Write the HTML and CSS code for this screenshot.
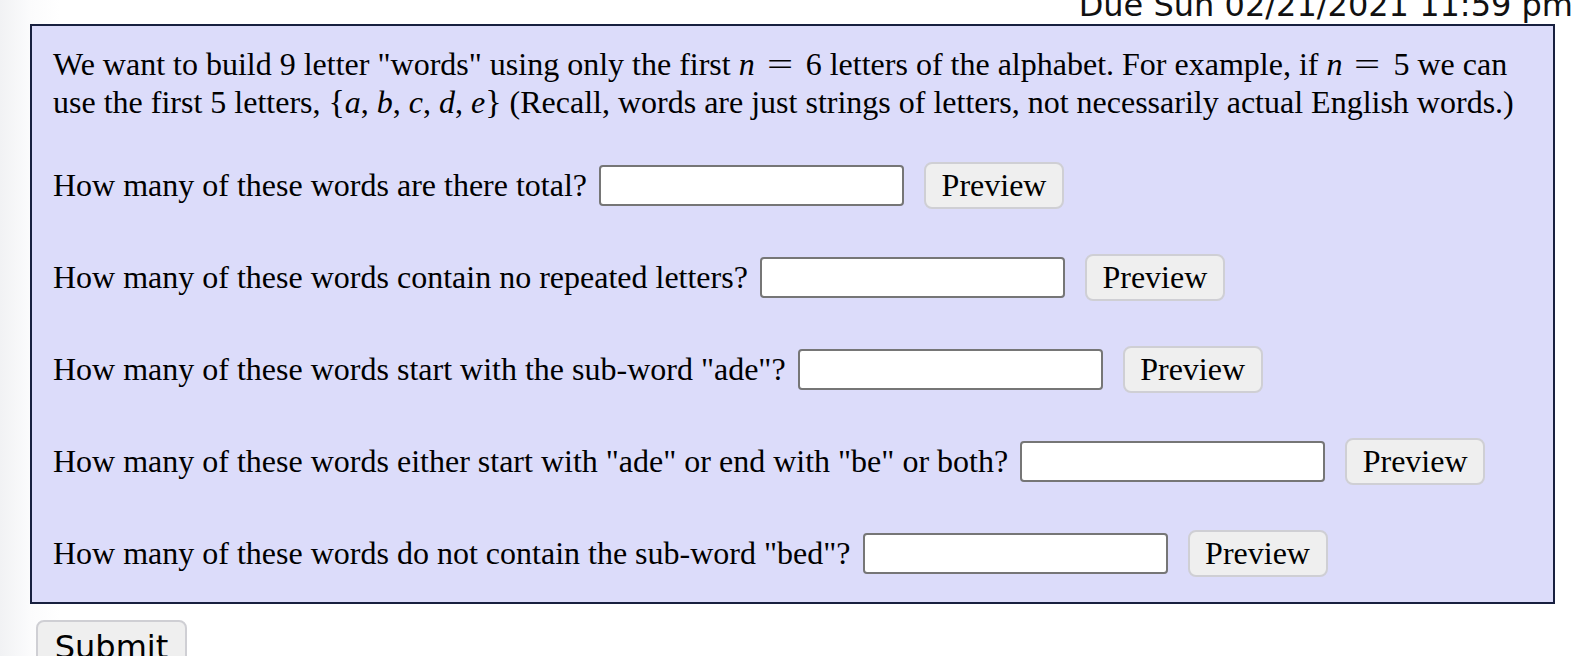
FILE: index.html
```html
<!DOCTYPE html>
<html>
<head>
<meta charset="utf-8">
<link rel="stylesheet" href="styles.css">
</head>
<body>
<div class="due">Due Sun 02/21/2021 11:59 pm</div>
<div class="problem">
  <p class="intro">We want to build 9 letter "words" using only the first <span class="math"><i>n</i><span class="eq">=</span>6</span> letters of the alphabet. For example, if <span class="math"><i>n</i><span class="eq">=</span>5</span> we can<br>use the first 5 letters, <span class="math"><span class="br">{</span><i>a</i><span class="cm">,</span><i>b</i><span class="cm">,</span><i>c</i><span class="cm">,</span><i>d</i><span class="cm">,</span><i>e</i><span class="br">}</span></span> (Recall, words are just strings of letters, not necessarily actual English words.)</p>
  <div class="q first"><span class="qt">How many of these words are there total?</span><input class="ans" type="text"><button class="prev">Preview</button></div>
  <div class="q"><span class="qt">How many of these words contain no repeated letters?</span><input class="ans" type="text"><button class="prev">Preview</button></div>
  <div class="q"><span class="qt">How many of these words start with the sub-word "ade"?</span><input class="ans" type="text"><button class="prev">Preview</button></div>
  <div class="q"><span class="qt">How many of these words either start with "ade" or end with "be" or both?</span><input class="ans" type="text"><button class="prev">Preview</button></div>
  <div class="q"><span class="qt">How many of these words do not contain the sub-word "bed"?</span><input class="ans" type="text"><button class="prev">Preview</button></div>
</div>
<button class="submit">Submit</button>
</body>
</html>
```
FILE: styles.css
```css
html, body {
  margin: 0;
  padding: 0;
  background: #ffffff;
  overflow: hidden;
}
body {
  width: 1580px;
  height: 656px;
  background: linear-gradient(to right, #f1f2f4 0, #fbfbfc 30px, #ffffff 60px);
}
.due {
  font-family: "DejaVu Sans", sans-serif;
  font-size: 32px;
  line-height: normal;
  text-align: right;
  color: #111;
  margin-top: -14px;
  padding-right: 7px;
  height: 37.5px;
}
.problem {
  margin-left: 30px;
  width: 1525px;
  box-sizing: border-box;
  background: #dcdcfa;
  border: 2px solid #18203f;
  padding: 20px 21px 25px 21px;
  font-family: "Liberation Serif", "Times New Roman", serif;
  font-size: 32px;
  color: #000;
}
.intro {
  margin: 0;
  line-height: normal;
  white-space: nowrap;
}
.math i {
  font-style: italic;
}
.eq {
  display: inline-block;
  margin: 0 17px 0 16px;
  transform: scaleX(1.45);
}
.cm {
  margin-right: 8px;
}
.br {
  display: inline-block;
  font-size: 34px;
}
.q {
  display: flex;
  align-items: center;
  height: 47px;
  margin-top: 45px;
}
.q.first {
  margin-top: 41px;
}
.qt {
  line-height: normal;
  white-space: nowrap;
}
.ans {
  margin: 0 0 0 12px;
  width: 305px;
  height: 41px;
  box-sizing: border-box;
  border: 2px solid #767676;
  border-radius: 4px;
  background: #fff;
  padding: 0 4px;
  font-size: 28px;
}
.prev {
  margin: 0 0 0 20px;
  height: 47px;
  width: 140px;
  box-sizing: border-box;
  border: 2px solid #cfcfd4;
  border-radius: 8px;
  background: #efefef;
  font-family: "Liberation Serif", "Times New Roman", serif;
  font-size: 32px;
  color: #000;
  padding: 0;
}
.submit {
  display: block;
  margin: 16px 0 0 36px;
  width: 151px;
  height: 50px;
  box-sizing: border-box;
  border: 2px solid #cfcfd4;
  border-radius: 8px;
  background: #efefef;
  font-family: "DejaVu Sans", sans-serif;
  font-size: 32px;
  color: #000;
  padding: 4px 0 0 0;
  text-align: center;
  line-height: normal;
}
```
